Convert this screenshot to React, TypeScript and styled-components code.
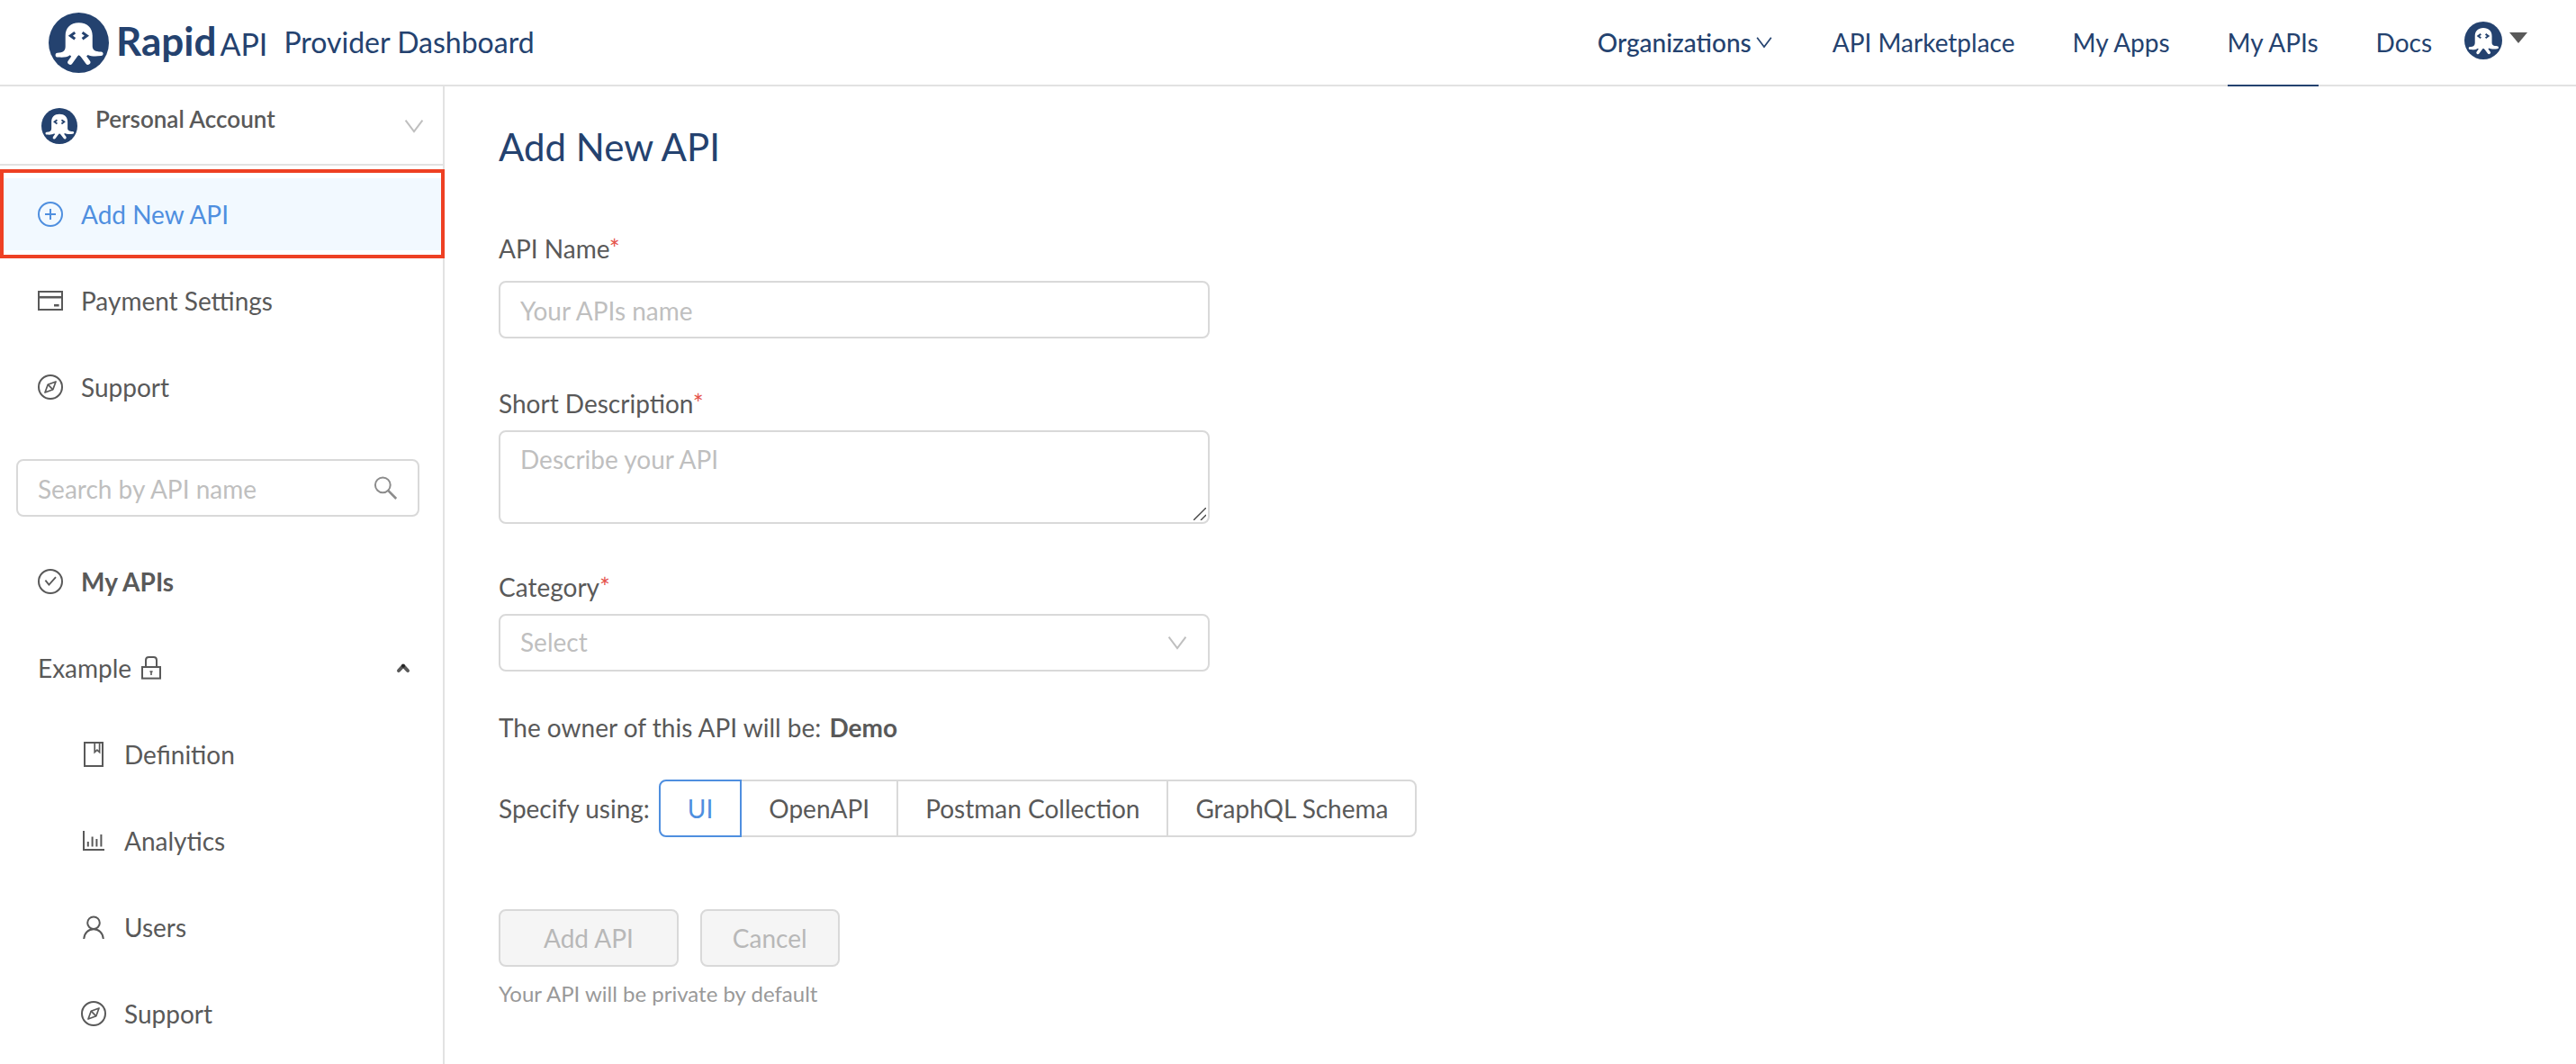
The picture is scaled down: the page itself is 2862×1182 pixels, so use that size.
import React, { useState } from "react";
import styled, { createGlobalStyle, css } from "styled-components";

const color = {
  navy: "#24426f",
  blue: "#4f8fdf",
  text: "#595959",
  muted: "#bfbfbf",
  hint: "#999999",
  border: "#d9d9d9",
  divider: "#e2e2e2",
  activeBg: "#f2f9ff",
  frame: "#ee4023",
  required: "#e5534b",
  disabledBg: "#f5f5f5",
};

const GlobalStyle = createGlobalStyle`
  *, *::before, *::after { box-sizing: border-box; }
  html, body, #root { height: 100%; }
  body {
    margin: 0;
    overflow: hidden;
    background: #fff;
    color: ${color.text};
    font-family: Lato, "Open Sans", sans-serif;
    font-size: 28px;
    line-height: 40px;
  }
  button, input, textarea, select { font: inherit; color: inherit; margin: 0; }
  a { color: inherit; text-decoration: none; }
`;

/* ---------- icons ---------- */

const Glyph = styled.svg<{ $size?: number }>`
  display: block;
  flex: none;
  width: ${(p) => p.$size ?? 28}px;
  height: ${(p) => p.$size ?? 28}px;
  fill: none;
  stroke: currentColor;
  stroke-width: 2;
`;

const PlusCircleIcon = () => (
  <Glyph viewBox="0 0 28 28" aria-hidden="true">
    <circle cx="14" cy="14" r="13" />
    <path d="M14 8v12M8 14h12" />
  </Glyph>
);

const CardIcon = () => (
  <Glyph viewBox="0 0 28 28" aria-hidden="true">
    <rect x="1" y="4" width="26" height="20" />
    <path d="M1 10.2h26" strokeWidth="2.6" />
    <path d="M18 19.2h5.6" strokeWidth="2.6" />
  </Glyph>
);

const CompassIcon = () => (
  <Glyph viewBox="0 0 28 28" aria-hidden="true">
    <circle cx="14" cy="14" r="13" />
    <path d="M20 8 16.8 16.8 8 20 11.2 11.2Z" strokeWidth="1.7" strokeLinejoin="round" />
    <path d="M11.2 11.2 16.8 16.8" strokeWidth="1.7" />
  </Glyph>
);

const CheckCircleIcon = () => (
  <Glyph viewBox="0 0 28 28" aria-hidden="true">
    <circle cx="14" cy="14" r="13" />
    <path d="M8.4 12.6 12.4 17.6 20 9.2" strokeWidth="1.8" />
  </Glyph>
);

const LockIcon = () => (
  <Glyph viewBox="0 0 28 28" aria-hidden="true">
    <rect x="4" y="13" width="20" height="12.6" />
    <path d="M8 13V5.4Q8 2 11.4 2h5.2Q20 2 20 5.4V13" />
    <path d="M12.4 18h3.2M14 17.4V22" strokeWidth="1.6" />
  </Glyph>
);

const BookIcon = () => (
  <Glyph viewBox="0 0 28 28" aria-hidden="true">
    <rect x="4" y="1" width="20" height="26" />
    <path d="M15.2 1v10.6l2.7-2.4 2.7 2.4V1" strokeWidth="1.7" />
  </Glyph>
);

const ChartIcon = () => (
  <Glyph viewBox="0 0 28 28" aria-hidden="true">
    <path d="M3 3v21h23" />
    <path d="M7.8 15v5.4M12.6 9.6v10.8M17.4 12v8.4M22.4 7v13.4" />
  </Glyph>
);

const UserIcon = () => (
  <Glyph viewBox="0 0 28 28" aria-hidden="true">
    <circle cx="14" cy="9.2" r="6.8" />
    <path d="M3.2 27C3.6 20.6 8 16.2 14 16.2S24.4 20.6 24.8 27" />
  </Glyph>
);

const SearchIcon = () => (
  <Glyph viewBox="0 0 28 28" aria-hidden="true">
    <circle cx="11.3" cy="10.8" r="8.4" />
    <path d="M17.2 16.8 26.2 26" strokeWidth="2.6" />
  </Glyph>
);

const ChevronDown = ({ size = 24 }: { size?: number }) => (
  <Glyph $size={size} viewBox="0 0 24 24" aria-hidden="true">
    <path d="M2.6 5.6 12 18 21.4 5.6" />
  </Glyph>
);

const CaretUp = () => (
  <Glyph $size={16} viewBox="0 0 16 16" aria-hidden="true">
    <path d="M3 11 8 5.6 13 11" strokeWidth="4" strokeLinecap="round" strokeLinejoin="round" />
    <circle cx="8" cy="5.8" r="2" fill="#222" stroke="none" />
  </Glyph>
);

const CaretFill = () => (
  <Glyph $size={20} viewBox="0 0 20 20" aria-hidden="true">
    <path d="M0 1h20L10 13Z" fill={color.text} stroke="none" />
  </Glyph>
);

const OctopusMark = ({ size }: { size: number }) => (
  <Glyph $size={size} viewBox="0 0 66 66" aria-hidden="true">
    <circle cx="33" cy="33" r="33" fill={color.navy} stroke="none" />
    <path
      d="M33 11C24 11 18.4 16.6 18.4 25V37C18.4 42 15.6 44 9.6 44 6.6 44.2 6.8 48.8 10 48.8 16 49.2 20 49 23.4 46.6L27 50 33 46.6 39 50 43 46.2C46.6 48 51 48 57.4 47.4 60.6 47 60.4 43 57.4 42.8 51 42.6 48 41 48 36.6V25C48 16.6 42.4 11 33 11Z"
      fill="#fff"
      stroke="none"
    />
    <path d="M31 44 23.6 54.2M35.4 44 43 54.2" stroke="#fff" strokeWidth="5.4" strokeLinecap="round" />
    <path d="M28.8 21.8 24 25.3 28.8 28.8M37 21.8 41.8 25.3 37 28.8" stroke={color.navy} strokeWidth="3" />
  </Glyph>
);

/* ---------- header ---------- */

const Page = styled.div`
  display: flex;
  flex-direction: column;
  min-height: 100%;
`;

const Header = styled.header`
  display: flex;
  justify-content: space-between;
  height: 96px;
  padding: 0 54px;
  border-bottom: 2px solid ${color.divider};
  color: ${color.navy};
`;

const Brand = styled.a`
  display: flex;
  align-items: center;
  gap: 8px;
`;

const Wordmark = styled.span`
  display: flex;
  align-items: baseline;
  gap: 4px;
`;

const WordmarkName = styled.span`
  font-size: 44px;
  font-weight: 700;
`;

const WordmarkSuffix = styled.span`
  font-size: 34px;
`;

const BrandTitle = styled.span`
  padding-left: 10px;
  font-size: 32px;
`;

const TopNav = styled.nav`
  display: flex;
  gap: 64px;
`;

const navItem = css`
  display: flex;
  align-items: center;
  margin-bottom: -2px;
  padding: 0;
  border: 0;
  border-bottom: 2px solid transparent;
  background: none;
`;

const NavLink = styled.a<{ $active?: boolean }>`
  ${navItem}
  ${(p) => p.$active && `border-bottom-color: ${color.navy};`}
`;

const NavMenu = styled.button`
  ${navItem}
  gap: 4px;
  padding-right: 2px;
  font-weight: 500;
`;

const UserMenu = styled.button`
  ${navItem}
  gap: 8px;
  margin-left: -28px;
  padding-bottom: 4px;
`;

/* ---------- sidebar ---------- */

const Body = styled.div`
  display: flex;
  flex: 1;
`;

const Sidebar = styled.aside`
  flex: none;
  width: 494px;
  border-right: 2px solid ${color.divider};
`;

const Account = styled.button`
  display: flex;
  align-items: center;
  width: 100%;
  height: 88px;
  padding: 2px 20px 0 46px;
  border: 0;
  border-bottom: 2px solid ${color.divider};
  background: none;
  text-align: left;
`;

const AccountName = styled.span`
  flex: 1;
  padding: 0 0 16px 20px;
  font-size: 26px;
  font-weight: 600;
`;

const Faint = styled.span`
  display: flex;
  color: ${color.muted};
`;

const SideList = styled.ul`
  display: flex;
  flex-direction: column;
  gap: 16px;
  margin: 0;
  padding: 14px 0 0;
  list-style: none;
`;

const SideLink = styled.a<{ $active?: boolean; $strong?: boolean; $nested?: boolean }>`
  position: relative;
  display: flex;
  align-items: center;
  gap: 20px;
  height: 80px;
  padding-left: ${(p) => (p.$nested ? 90 : 42)}px;
  font-weight: ${(p) => (p.$strong ? 700 : 400)};
  ${(p) =>
    p.$active &&
    css`
      background: ${color.activeBg};
      color: ${color.blue};
      &::after {
        content: "";
        position: absolute;
        inset: -10px -2px -9px 0;
        border: 4px solid ${color.frame};
      }
    `}
`;

const SearchBox = styled.label`
  display: flex;
  align-items: center;
  height: 64px;
  margin: 40px 26px 18px 18px;
  padding: 0 22px;
  border: 2px solid ${color.border};
  border-radius: 8px;
  color: #8c8c8c;
`;

const SearchInput = styled.input`
  flex: 1;
  min-width: 0;
  padding: 2px 0 0;
  border: 0;
  outline: 0;
  background: none;
  color: ${color.text};
  &::placeholder { color: ${color.muted}; opacity: 1; }
`;

const ApiToggle = styled.button`
  display: flex;
  align-items: center;
  gap: 8px;
  width: 100%;
  height: 80px;
  padding: 0 36px 0 42px;
  border: 0;
  background: none;
`;

const Spacer = styled.span`
  flex: 1;
`;

/* ---------- form ---------- */

const Main = styled.main`
  flex: 1;
  padding: 40px 60px;
`;

const Title = styled.h1`
  margin: 0 0 66px;
  color: ${color.navy};
  font-size: 42px;
  font-weight: 400;
  line-height: 54px;
`;

const Form = styled.form`
  display: flex;
  flex-direction: column;
  max-width: 1040px;
`;

const Field = styled.div<{ $gap?: number; $after?: number }>`
  display: flex;
  flex-direction: column;
  gap: ${(p) => p.$gap ?? 10}px;
  max-width: 790px;
  margin-bottom: ${(p) => p.$after ?? 52}px;
`;

const Label = styled.label``;

const Required = styled.span`
  color: ${color.required};
`;

const control = css`
  width: 100%;
  padding: 0 22px;
  border: 2px solid ${color.border};
  border-radius: 8px;
  outline: 0;
  background: #fff;
  &::placeholder { color: ${color.muted}; opacity: 1; }
`;

const TextInput = styled.input`
  ${control}
  height: 64px;
  padding-top: 2px;
`;

const TextArea = styled.textarea`
  ${control}
  display: block;
  height: 104px;
  padding-top: 10px;
  resize: none;
`;

const AreaWrap = styled.div`
  position: relative;
`;

const Grip = styled.svg`
  position: absolute;
  right: 4px;
  bottom: 4px;
  width: 14px;
  height: 14px;
  stroke: #444;
  stroke-width: 1.4;
  pointer-events: none;
`;

const SelectWrap = styled.div`
  position: relative;
`;

const Select = styled.select`
  ${control}
  display: block;
  height: 64px;
  padding-bottom: 2px;
  appearance: none;
  color: ${color.muted};
`;

const SelectArrow = styled(Faint)`
  position: absolute;
  right: 24px;
  top: 20px;
  pointer-events: none;
`;

const Owner = styled.p`
  margin: -10px 0 38px;
`;

const OwnerName = styled.strong`
  margin-left: 2px;
`;

const Specify = styled.fieldset`
  display: flex;
  align-items: center;
  gap: 10px;
  margin: 0 0 80px;
  padding: 0;
  border: 0;
`;

const Segments = styled.div`
  display: flex;
`;

const Segment = styled.label<{ $checked: boolean }>`
  position: relative;
  display: flex;
  align-items: center;
  height: 64px;
  padding: 0 30px;
  border: 2px solid ${(p) => (p.$checked ? color.blue : color.border)};
  color: ${(p) => (p.$checked ? color.blue : color.text)};
  z-index: ${(p) => (p.$checked ? 1 : 0)};
  & + & { margin-left: -2px; }
  &:first-child { border-radius: 8px 0 0 8px; }
  &:last-child { border-radius: 0 8px 8px 0; }
`;

const SegmentRadio = styled.input`
  position: absolute;
  inset: 0;
  margin: 0;
  appearance: none;
  cursor: pointer;
`;

const Actions = styled.div`
  display: flex;
  gap: 24px;
  margin-bottom: 12px;
`;

const ActionButton = styled.button<{ $wide?: boolean }>`
  height: 64px;
  padding: 0 ${(p) => (p.$wide ? 48 : 34)}px;
  border: 2px solid ${color.border};
  border-radius: 8px;
  background: ${color.disabledBg};
  color: #b8b8b8;
`;

const Hint = styled.p`
  margin: 0;
  color: ${color.hint};
  font-size: 24px;
  line-height: 36px;
`;

const SPEC_KINDS = ["UI", "OpenAPI", "Postman Collection", "GraphQL Schema"];

export default function App() {
  const [kind, setKind] = useState("UI");
  const [open, setOpen] = useState(true);

  return (
    <Page>
      <GlobalStyle />
      <Header>
        <Brand href="#">
          <OctopusMark size={67} />
          <Wordmark>
            <WordmarkName>Rapid</WordmarkName>
            <WordmarkSuffix>API</WordmarkSuffix>
          </Wordmark>
          <BrandTitle>Provider Dashboard</BrandTitle>
        </Brand>
        <TopNav>
          <NavMenu type="button">
            Organizations
            <ChevronDown size={20} />
          </NavMenu>
          <NavLink href="#">API Marketplace</NavLink>
          <NavLink href="#">My Apps</NavLink>
          <NavLink href="#" $active>My APIs</NavLink>
          <NavLink href="#">Docs</NavLink>
          <UserMenu type="button" aria-label="User menu">
            <OctopusMark size={42} />
            <CaretFill />
          </UserMenu>
        </TopNav>
      </Header>

      <Body>
        <Sidebar>
          <Account type="button">
            <OctopusMark size={40} />
            <AccountName>Personal Account</AccountName>
            <Faint><ChevronDown /></Faint>
          </Account>
          <SideList>
            <li><SideLink href="#" $active><PlusCircleIcon />Add New API</SideLink></li>
            <li><SideLink href="#"><CardIcon />Payment Settings</SideLink></li>
            <li><SideLink href="#"><CompassIcon />Support</SideLink></li>
          </SideList>
          <SearchBox>
            <SearchInput type="text" placeholder="Search by API name" aria-label="Search by API name" />
            <SearchIcon />
          </SearchBox>
          <SideList>
            <li><SideLink href="#" $strong><CheckCircleIcon />My APIs</SideLink></li>
            <li>
              <ApiToggle type="button" aria-expanded={open} onClick={() => setOpen(!open)}>
                Example
                <LockIcon />
                <Spacer />
                <CaretUp />
              </ApiToggle>
            </li>
            {open && (
              <>
                <li><SideLink href="#" $nested><BookIcon />Definition</SideLink></li>
                <li><SideLink href="#" $nested><ChartIcon />Analytics</SideLink></li>
                <li><SideLink href="#" $nested><UserIcon />Users</SideLink></li>
                <li><SideLink href="#" $nested><CompassIcon />Support</SideLink></li>
              </>
            )}
          </SideList>
        </Sidebar>

        <Main>
          <Title>Add New API</Title>
          <Form onSubmit={(e) => e.preventDefault()}>
            <Field $gap={16}>
              <Label htmlFor="api-name">API Name<Required>*</Required></Label>
              <TextInput id="api-name" type="text" placeholder="Your APIs name" />
            </Field>
            <Field $after={50}>
              <Label htmlFor="api-desc">Short Description<Required>*</Required></Label>
              <AreaWrap>
                <TextArea id="api-desc" placeholder="Describe your API" />
                <Grip viewBox="0 0 14 14" aria-hidden="true">
                  <path d="M0 14 14 0M8 14 14 8" />
                </Grip>
              </AreaWrap>
            </Field>
            <Field>
              <Label htmlFor="api-category">Category<Required>*</Required></Label>
              <SelectWrap>
                <Select id="api-category" defaultValue="">
                  <option value="">Select</option>
                </Select>
                <SelectArrow><ChevronDown /></SelectArrow>
              </SelectWrap>
            </Field>
            <Owner>
              The owner of this API will be: <OwnerName>Demo</OwnerName>
            </Owner>
            <Specify aria-label="Specify using">
              <span>Specify using:</span>
              <Segments>
                {SPEC_KINDS.map((name) => (
                  <Segment key={name} $checked={kind === name}>
                    <SegmentRadio
                      type="radio"
                      name="spec"
                      checked={kind === name}
                      onChange={() => setKind(name)}
                    />
                    {name}
                  </Segment>
                ))}
              </Segments>
            </Specify>
            <Actions>
              <ActionButton type="submit" disabled $wide>Add API</ActionButton>
              <ActionButton type="button" disabled>Cancel</ActionButton>
            </Actions>
            <Hint>Your API will be private by default</Hint>
          </Form>
        </Main>
      </Body>
    </Page>
  );
}
